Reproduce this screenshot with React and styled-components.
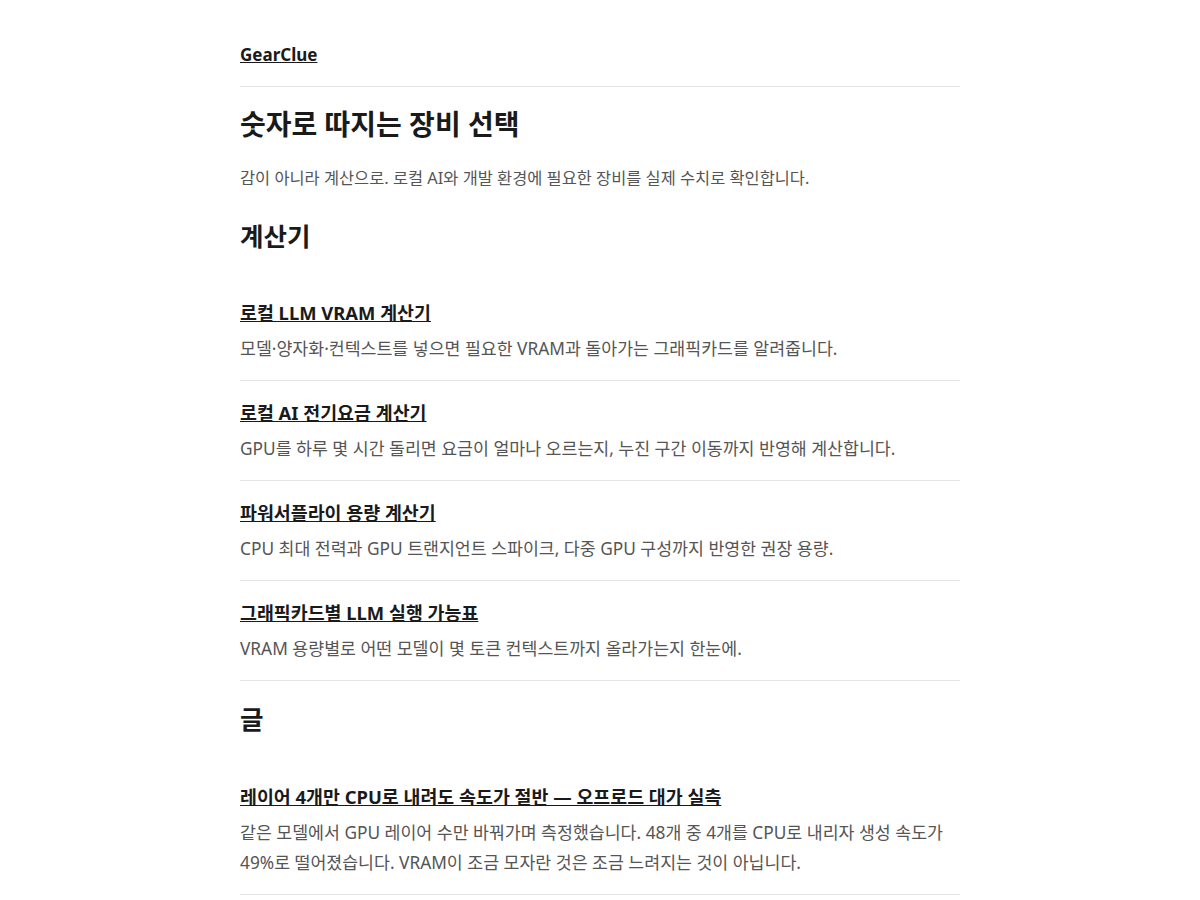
import React from 'react';
import styled, {createGlobalStyle} from 'styled-components';

const GlobalStyle = createGlobalStyle`
    body {
        margin: 0;
        background: #ffffff;
        color: #1a1a1a;
        font-family: "Noto Sans", "Noto Sans CJK KR", sans-serif;
    }
`;

const Page = styled.div`
    max-width: 720px;
    margin: 0 auto;
    padding: 41px 0 60px;
`;

const Header = styled.header`
    padding-bottom: 18px;
    border-bottom: 1px solid #e5e5e5;
`;

const Logo = styled.a`
    font-size: 17px;
    line-height: 27px;
    font-weight: 700;
    color: #1a1a1a;
    text-decoration: underline;
`;

const Hero = styled.h1`
    margin: 19px 0 0;
    font-size: 28px;
    line-height: 36px;
    font-weight: 700;
`;

const Lead = styled.p`
    margin: 22px 0 0;
    font-size: 16.4px;
    line-height: 27px;
    color: #555;
`;

const SectionTitle = styled.h2`
    margin: ${p => p.$top}px 0 ${p => p.$bottom}px;
    font-size: 25.5px;
    line-height: 31px;
    font-weight: 700;
`;

const List = styled.ul`
    list-style: none;
    margin: 0;
    padding: 0;
`;

const Item = styled.li`
    padding: 18px 0 16px;
    border-bottom: 1px solid #e5e5e5;
`;

const ItemTitle = styled.a`
    display: block;
    font-size: 18.4px;
    line-height: 27px;
    font-weight: 700;
    color: #1a1a1a;
    text-decoration: underline;
`;

const ItemDesc = styled.p`
    margin: 8px 0 0;
    font-size: 17.3px;
    line-height: 30px;
    color: #555;
`;

const calculators = [
    {
        title: '로컬 LLM VRAM 계산기',
        desc: '모델·양자화·컨텍스트를 넣으면 필요한 VRAM과 돌아가는 그래픽카드를 알려줍니다.'
    },
    {
        title: '로컬 AI 전기요금 계산기',
        desc: 'GPU를 하루 몇 시간 돌리면 요금이 얼마나 오르는지, 누진 구간 이동까지 반영해 계산합니다.'
    },
    {
        title: '파워서플라이 용량 계산기',
        desc: 'CPU 최대 전력과 GPU 트랜지언트 스파이크, 다중 GPU 구성까지 반영한 권장 용량.'
    },
    {
        title: '그래픽카드별 LLM 실행 가능표',
        desc: 'VRAM 용량별로 어떤 모델이 몇 토큰 컨텍스트까지 올라가는지 한눈에.'
    }
];

const posts = [
    {
        title: '레이어 4개만 CPU로 내려도 속도가 절반 — 오프로드 대가 실측',
        desc: '같은 모델에서 GPU 레이어 수만 바꿔가며 측정했습니다. 48개 중 4개를 CPU로 내리자 생성 속도가 49%로 떨어졌습니다. VRAM이 조금 모자란 것은 조금 느려지는 것이 아닙니다.'
    }
];

const Entry = ({title, desc}) => (
    <Item>
        <ItemTitle href="#">{title}</ItemTitle>
        <ItemDesc>{desc}</ItemDesc>
    </Item>
);

export default function App() {
    return (
        <Page>
            <GlobalStyle/>
            <Header>
                <Logo href="#">GearClue</Logo>
            </Header>
            <Hero>숫자로 따지는 장비 선택</Hero>
            <Lead>감이 아니라 계산으로. 로컬 AI와 개발 환경에 필요한 장비를 실제 수치로 확인합니다.</Lead>

            <SectionTitle $top={30} $bottom={29}>계산기</SectionTitle>
            <List>
                {calculators.map(c => <Entry key={c.title} {...c}/>)}
            </List>

            <SectionTitle $top={23} $bottom={30}>글</SectionTitle>
            <List>
                {posts.map(p => <Entry key={p.title} {...p}/>)}
            </List>
        </Page>
    );
}
